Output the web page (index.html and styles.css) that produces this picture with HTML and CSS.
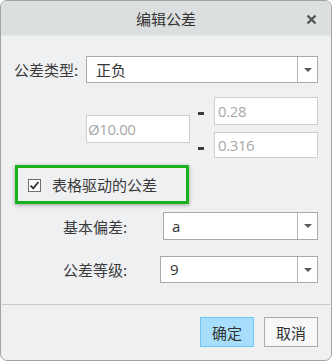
FILE: index.html
```html
<!DOCTYPE html>
<html lang="zh-CN">
<head>
<meta charset="utf-8">
<title>编辑公差</title>
<link rel="stylesheet" href="styles.css">
</head>
<body>
<div class="dialog">
  <div class="titlebar">
    <span class="title">编辑公差</span>
    <span class="close">
      <svg width="11" height="11" viewBox="0 0 11 11"><path d="M1.5 1.5 L9.5 9.5 M9.5 1.5 L1.5 9.5" stroke="#555" stroke-width="2.4" stroke-linecap="butt"/></svg>
    </span>
  </div>
  <div class="content">
    <div class="row type-row">
      <span class="label">公差类型:</span>
      <div class="select sel-type"><span class="value">正负</span><span class="arrow"></span></div>
    </div>
    <div class="tol">
      <div class="input base">Ø10.00</div>
      <span class="dash d1"></span>
      <div class="input up">0.28</div>
      <span class="dash d2"></span>
      <div class="input low">0.316</div>
    </div>
    <div class="highlight">
      <span class="checkbox"><svg width="11" height="11" viewBox="0 0 11 11"><path d="M1.5 5.5 L4.2 8.3 L9.5 2" fill="none" stroke="#333" stroke-width="1.8"/></svg></span>
      <span class="check-label">表格驱动的公差</span>
    </div>
    <div class="row sub-row r1">
      <span class="label">基本偏差:</span>
      <div class="select sel-dev"><span class="value">a</span><span class="arrow"></span></div>
    </div>
    <div class="row sub-row r2">
      <span class="label">公差等级:</span>
      <div class="select sel-grade"><span class="value">9</span><span class="arrow"></span></div>
    </div>
  </div>
  <div class="footer">
    <button class="btn ok">确定</button>
    <button class="btn cancel">取消</button>
  </div>
</div>
</body>
</html>
```
FILE: styles.css
```css
* { box-sizing: border-box; }
html, body { margin: 0; padding: 0; background: #ffffff; }
body { width: 332px; height: 361px; font-family: "Noto Sans CJK SC", "Noto Sans", sans-serif; color: #3a3a3a; }

.dialog {
  width: 332px;
  height: 361px;
  border: 1px solid #a3a3a3;
  border-radius: 7px;
  background: #eef0f2;
  overflow: hidden;
  display: flex;
  flex-direction: column;
}

.titlebar {
  height: 35px;
  background: #dcdfe0;
  display: flex;
  align-items: center;
  justify-content: center;
  position: relative;
  border-bottom: 1px solid #e4e6e8;
}
.title { font-size: 15px; color: #333; line-height: 1; margin-left: 0; }
.close { position: absolute; right: 14px; top: 13px; line-height: 0; }

.content { padding: 20px 13px 0 13px; flex: 1; }

.row { display: flex; align-items: center; }
.label { font-size: 15px; line-height: 1; color: #3a3a3a; flex: none; }

.select {
  display: flex;
  align-items: stretch;
  background: #ffffff;
  border: 1px solid #a9a9a9;
  flex: none;
}
.select .value { flex: 1; font-size: 15px; line-height: 1; display: flex; align-items: center; color: #333; font-family: "Open Sans", "Noto Sans CJK SC", sans-serif; }
.select .arrow {
  width: 20px;
  border-left: 1px solid #b4b4b4;
  display: flex; align-items: center; justify-content: center;
}
.select .arrow::after {
  content: "";
  border-left: 4px solid transparent;
  border-right: 4px solid transparent;
  border-top: 4px solid #5a5a5a;
}

.type-row { height: 27px; }
.type-row .label { width: 72px; }
.sel-type { width: 232px; height: 27px; }
.sel-type .value { padding-left: 9px; font-family: "Noto Sans CJK SC", sans-serif; }

.tol {
  display: grid;
  grid-template-columns: 104px 24px 104px;
  grid-template-rows: 28px 26px;
  row-gap: 7px;
  margin: 14px 0 0 72px;
}
.input {
  background: #ffffff;
  border: 1px solid #cfcfcf;
  color: #a8a8a8;
  font-size: 15px;
  font-family: "Open Sans", sans-serif;
  display: flex; align-items: center;
  padding-left: 1px;
  letter-spacing: -0.4px;
}
.up, .low { padding-left: 3px; }
.base { grid-column: 1; grid-row: 1 / span 2; align-self: center; height: 28px; margin-top: 2px; }
.up { grid-column: 3; grid-row: 1; }
.low { grid-column: 3; grid-row: 2; }
.dash { width: 6px; height: 3px; background: #3a3a3a; justify-self: center; align-self: center; margin-left: -2px; }
.d1 { grid-column: 2; grid-row: 1; margin-top: 5px; }
.d2 { grid-column: 2; grid-row: 2; margin-top: 6px; }

.highlight {
  width: 174px;
  height: 39px;
  margin: 7px 0 0 1px;
  border: 3px solid #19b21f;
  box-shadow: 0 1px 4px rgba(0,0,0,0.35);
  display: flex; align-items: center;
  padding-left: 10px;
}
.checkbox {
  width: 13px; height: 13px;
  border: 1px solid #6e6e6e;
  background: #fff;
  display: flex; align-items: center; justify-content: center;
  margin-top: 2px;
}
.check-label { font-size: 15px; margin-left: 11px; line-height: 1; color: #3a3a3a; }

.sub-row .label { margin-left: 49px; }
.r1 { margin-top: 8px; height: 28px; }
.r1 .label { width: 100px; }
.sel-dev { width: 155px; height: 28px; }
.sel-dev .value { padding-left: 8px; }
.r2 { margin-top: 16px; height: 27px; }
.r2 .label { width: 97px; }
.sel-grade { width: 158px; height: 27px; }
.sel-grade .value { padding-left: 9px; }

.footer {
  border-top: 1px solid #c8c8c8;
  margin: 0 1px;
  height: 56px;
  display: flex;
  justify-content: flex-end;
  align-items: flex-start;
  padding: 12px 12px 0 0;
  gap: 10px;
}
.btn {
  width: 54px; height: 30px;
  font-family: "Noto Sans CJK SC", sans-serif;
  font-size: 15px;
  color: #333;
  padding: 0;
  border-radius: 0;
}
.ok { background: #a7defb; border: 1px solid #6dc7f3; }
.cancel { background: #f7f7f7; border: 1px solid #ababab; }
```
